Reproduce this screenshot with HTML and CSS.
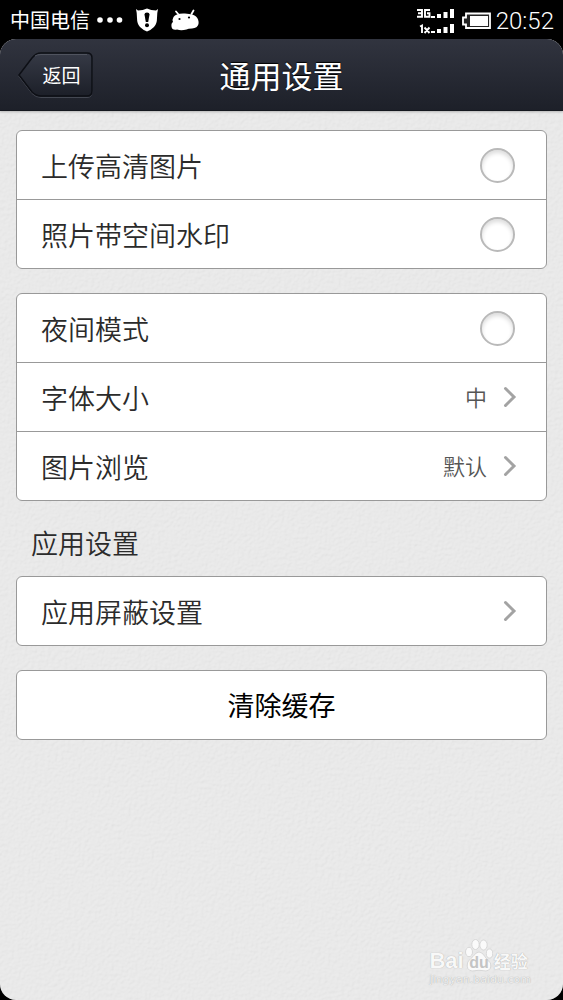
FILE: index.html
```html
<!DOCTYPE html>
<html lang="zh-CN">
<head>
<meta charset="utf-8">
<meta name="viewport" content="width=device-width, initial-scale=1">
<title>通用设置</title>
<link rel="stylesheet" href="styles.css">
</head>
<body>
<div class="status-bar">
  <span class="carrier">中国电信</span>
  <svg class="dots" width="26" height="6" viewBox="0 0 26 6" fill="#fff" aria-hidden="true"><circle cx="3" cy="3" r="2.8"/><circle cx="13" cy="3" r="2.8"/><circle cx="22.5" cy="3" r="2.8"/></svg>
  <svg class="shield" width="22" height="24" viewBox="0 0 22 24" aria-hidden="true"><path fill="#fff" d="M0 1 2 2.500Q7 2.500 11 0.500Q15 2.500 20 2.500L22 1Q21 5 21 10Q21 16 18 19Q15 22 11 23.500Q7 22 4 19Q1 16 1 10Q1 5 0 1Z"/><path fill="#000" d="M8.500 6.500Q8.500 4.500 11 4.500T13.500 6.500L12.200 14H9.800Z"/><circle cx="11" cy="17.300" r="2" fill="#000"/></svg>
  <svg class="robot" width="28" height="22" viewBox="0 0 28 22" aria-hidden="true"><path d="M5 2.500 8 6M22.500 1.500 20.500 5" stroke="#fff" stroke-width="1.800" stroke-linecap="round"/><path fill="#fff" d="M2.500 8Q5 4 14 4.500T25 7.500Q28 10 27.500 15Q26.500 19 21 19.500Q17 19.500 15.500 20.500Q10 22 6 20.500Q1 21.500 0.500 17.500Q0 14 2 13Q1 10.500 2.500 8Z"/><circle cx="8.500" cy="10" r="1.100"/><circle cx="18" cy="8.500" r="1.100"/></svg>
  <svg class="signal" width="40" height="26" viewBox="0 0 40 26" aria-hidden="true"><g fill="none" stroke="#fff" stroke-width="1.900"><path d="M1 2H6V8.700H1M2 5.300H6M14 2H9V8.700H13.500V5.300H11M4 18.500 6 17.500V25M8.500 19.500 13.500 25M13.500 19.500 8.500 25"/></g><path fill="#fff" d="M15 8h4v2h-4zM21 6h4v4h-4zM27.500 4h4v6h-4zM34 1h4v9h-4zM15 23h4v2h-4zM21 21h4v4h-4zM27.500 19h4v6h-4zM34 16h4v9h-4z"/></svg>
  <svg class="battery" width="30" height="18" viewBox="0 0 30 18" aria-hidden="true"><path d="M4 1.500H28V16H4V12.500H1V5.500H4Z" fill="#222" stroke="#fff" stroke-width="1.800"/><path fill="#fff" d="M8 4H26V14H8z"/></svg>
  <time class="clock">20:52</time>
</div>
<div class="screen">
  <svg class="paper" aria-hidden="true">
    <filter id="grain" x="0" y="0" width="100%" height="100%">
      <feTurbulence type="fractalNoise" baseFrequency="0.3" numOctaves="2" seed="4"/>
      <feDiffuseLighting surfaceScale="0.8" lighting-color="#fff"><feDistantLight azimuth="235" elevation="60"/></feDiffuseLighting>
    </filter>
    <rect width="100%" height="100%" filter="url(#grain)"/>
  </svg>
  <header class="title-bar">
    <button class="back" type="button">
      <svg class="back-shape" width="77" height="48" viewBox="0 0 77 48" aria-hidden="true">
        <defs><linearGradient id="face" x2="0" y2="1"><stop stop-color="#363a46"/><stop offset="1" stop-color="#1c1f28"/></linearGradient></defs>
        <path d="M2 24 15 7Q19 2 24 2H70Q75 2 75 7V40Q75 45 70 45H24Q19 45 15 41Z" fill="none" stroke="#444852" transform="translate(0 1.500)"/>
        <path d="M2 24 15 7Q19 2 24 2H70Q75 2 75 7V40Q75 45 70 45H24Q19 45 15 41Z" fill="url(#face)" stroke="#0d0f15" stroke-width="1.500"/>
        <path d="M18 5Q20 3.500 24 3.500H70" fill="none" stroke="#50545f"/>
      </svg>
      <span class="back-text">返回</span>
    </button>
    <h1 class="title">通用设置</h1>
  </header>
  <main class="content">
    <section class="card">
      <label class="row"><span>上传高清图片</span><input class="toggle" type="checkbox"></label>
      <label class="row"><span>照片带空间水印</span><input class="toggle" type="checkbox"></label>
    </section>
    <section class="card">
      <label class="row"><span>夜间模式</span><input class="toggle" type="checkbox"></label>
      <button class="row" type="button"><span>字体大小</span><span class="value">中</span><svg class="chevron" width="14" height="22" viewBox="0 0 14 22" aria-hidden="true"><path d="M2.500 2.500 11 11 2.500 19.500"/></svg></button>
      <button class="row" type="button"><span>图片浏览</span><span class="value">默认</span><svg class="chevron" width="14" height="22" viewBox="0 0 14 22" aria-hidden="true"><path d="M2.500 2.500 11 11 2.500 19.500"/></svg></button>
    </section>
    <h2 class="section-title">应用设置</h2>
    <section class="card">
      <button class="row" type="button"><span>应用屏蔽设置</span><svg class="chevron" width="14" height="22" viewBox="0 0 14 22" aria-hidden="true"><path d="M2.500 2.500 11 11 2.500 19.500"/></svg></button>
    </section>
    <section class="card">
      <button class="row clear" type="button">清除缓存</button>
    </section>
  </main>
  <div class="watermark">
    <div class="brand"><span>Bai</span><svg width="28" height="33" viewBox="0 0 28 33" aria-hidden="true"><g fill="#fafafa" stroke="#d0d0d0" stroke-width="0.800"><ellipse cx="4" cy="13" rx="3.500" ry="4.700"/><ellipse cx="10.500" cy="5.500" rx="3.700" ry="5"/><ellipse cx="18.500" cy="6" rx="3.700" ry="5"/><ellipse cx="24.500" cy="14.500" rx="3.200" ry="4.500"/><path d="M14 13Q17 13 19.500 17T25.500 24Q27 31 21 32Q14 30.500 7 32Q1 31 2.500 24Q3 22 8 17.500Q11 13 14 13Z"/></g><text class="paw-text" x="14" y="29" text-anchor="middle">du</text></svg><span class="brand-cn">经验</span></div>
    <div class="domain">jingyan.baidu.com</div>
  </div>
</div>
</body>
</html>
```
FILE: styles.css
```css
* {
  box-sizing: border-box;
}

body {
  margin: 0;
  min-height: 100vh;
  display: flex;
  flex-direction: column;
  background: #000;
  color: #2b2b2b;
  font-family: "Noto Sans CJK SC", sans-serif;
}

button {
  margin: 0;
  padding: 0;
  border: 0;
  background: none;
  color: inherit;
  font: inherit;
  cursor: pointer;
}

.status-bar {
  display: flex;
  align-items: center;
  height: 39px;
  padding: 0 9px 0 10px;
  color: #fff;
}

.carrier {
  font-size: 20px;
  line-height: 38px;
}

.dots {
  margin-left: 7px;
}

.shield {
  margin-left: 13px;
}

.robot {
  margin: 0 auto 0 13px;
}

.signal {
  margin-top: 3px;
}

.battery {
  margin: 2px 4px 0 6px;
}

.clock {
  padding-top: 3px;
  font-family: Roboto, sans-serif;
  font-size: 24px;
  font-weight: 300;
}

.screen {
  position: relative;
  flex: 1;
  display: flex;
  flex-direction: column;
  overflow: hidden;
  border-radius: 16px;
  background: #e8e8e8;
}

.paper {
  position: absolute;
  inset: 0;
  width: 100%;
  height: 100%;
  opacity: 0.2;
}

.title-bar {
  position: relative;
  display: grid;
  grid-template-columns: 1fr auto 1fr;
  align-items: center;
  height: 72px;
  padding: 0 17px;
  border-bottom: 1px solid #15181f;
  background: linear-gradient(#31343f, #1d2029);
  box-shadow: 0 1px 2px #8888;
}

.back {
  display: grid;
  justify-self: start;
  align-items: center;
  color: #fff;
  font-size: 19px;
  line-height: 28px;
}

.back-shape,
.back-text {
  grid-area: 1 / 1;
}

.back-text {
  z-index: 1;
  padding-left: 12px;
}

.title {
  margin: 0;
  color: #fff;
  font-size: 31px;
  font-weight: 400;
  line-height: 40px;
  text-shadow: 0 -1px 1px #000;
}

.content {
  position: relative;
  padding: 19px 16px;
}

.card {
  margin-bottom: 24px;
  overflow: hidden;
  border: 1px solid #999;
  border-radius: 6px;
  background: #fff;
}

.row {
  display: flex;
  align-items: center;
  width: 100%;
  height: 68px;
  padding: 0 29px 0 24px;
  font-size: 27px;
  font-weight: 350;
}

.row + .row {
  height: 69px;
  border-top: 1px solid #999;
}

.toggle {
  appearance: none;
  width: 35px;
  height: 35px;
  margin: 0 2px 0 auto;
  border: 2px solid #b9b9b9;
  border-radius: 50%;
  background: #fff;
  box-shadow: inset 0 3px 4px #ddd;
}

.toggle:checked {
  background: #5aa7e0;
}

.chevron {
  margin-left: auto;
  fill: none;
  stroke: #a3a3a3;
  stroke-width: 3;
  stroke-linecap: round;
}

.value {
  margin-left: auto;
  padding-bottom: 2px;
  color: #555;
  font-size: 22px;
}

.value + .chevron {
  margin-left: 16px;
}

.section-title {
  margin: -8px 0 0;
  padding: 0 15px 7px;
  font-size: 27px;
  font-weight: 350;
  line-height: 52px;
}

.clear {
  justify-content: center;
  padding: 0 0 2px;
  color: #000;
  font-weight: 400;
}

.watermark {
  position: absolute;
  right: 32px;
  bottom: 12px;
  color: #f8f8f8;
  text-shadow: 0 0 1px #999;
}

.brand {
  display: flex;
  align-items: flex-end;
  gap: 1px;
  font: bold 22px/22px "Liberation Sans", sans-serif;
}

.brand-cn {
  font-family: "Noto Sans CJK SC", sans-serif;
  font-size: 17px;
}

.paw-text {
  fill: #c4c4c4;
  font-size: 16px;
  text-shadow: none;
}

.domain {
  color: #f0f0f0;
  font: 11px/16px "DejaVu Sans", sans-serif;
}
```
